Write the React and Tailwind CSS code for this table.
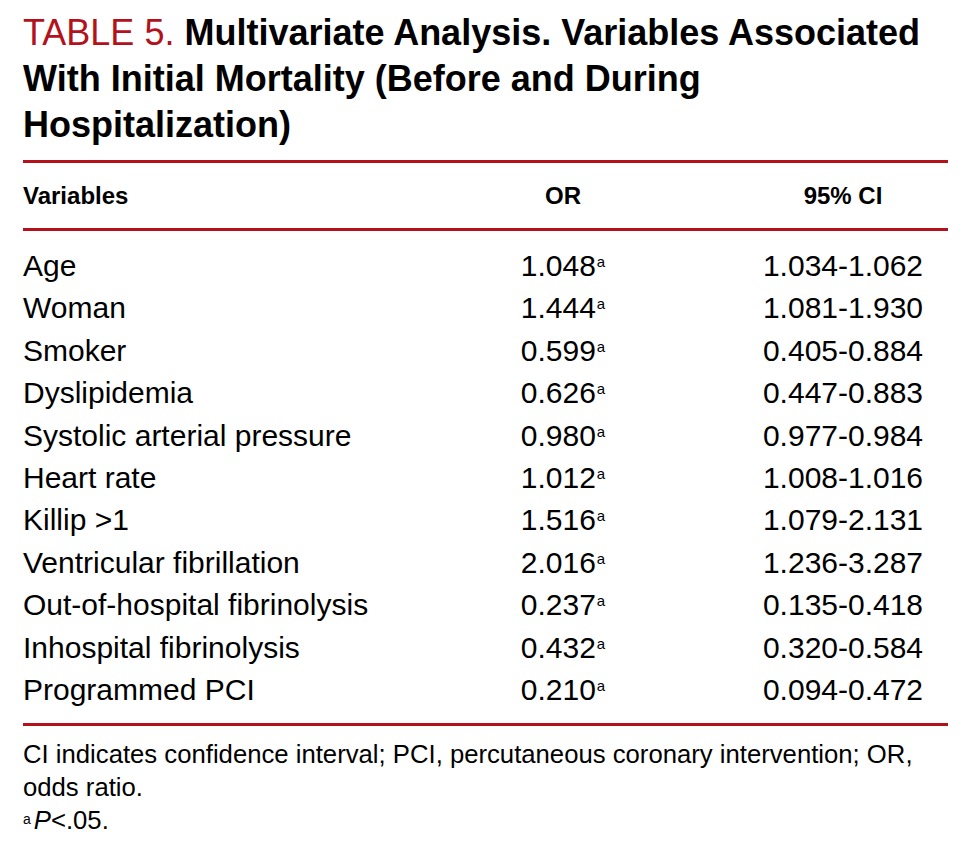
import React from "react";

const rows = [
  ["Age", "1.048", "1.034-1.062"],
  ["Woman", "1.444", "1.081-1.930"],
  ["Smoker", "0.599", "0.405-0.884"],
  ["Dyslipidemia", "0.626", "0.447-0.883"],
  ["Systolic arterial pressure", "0.980", "0.977-0.984"],
  ["Heart rate", "1.012", "1.008-1.016"],
  ["Killip >1", "1.516", "1.079-2.131"],
  ["Ventricular fibrillation", "2.016", "1.236-3.287"],
  ["Out-of-hospital fibrinolysis", "0.237", "0.135-0.418"],
  ["Inhospital fibrinolysis", "0.432", "0.320-0.584"],
  ["Programmed PCI", "0.210", "0.094-0.472"],
];

const Rule = () => <div className="h-[3px] w-full bg-[#b3111c]" />;

const App = () => {
  return (
    <div className="w-[978px] h-[850px] bg-white text-black font-['Liberation_Sans',Arial,sans-serif]">
      <div className="w-[925px] ml-[23px]">
        <h1 className="pt-[10px] text-[36px] leading-[46px] font-bold">
          <span className="text-[#b3111c] font-normal">TABLE 5.</span> Multivariate
          Analysis. Variables Associated With Initial Mortality (Before and
          During Hospitalization)
        </h1>

        <div className="mt-[12px]">
          <Rule />
        </div>

        <div className="grid grid-cols-[365px_350px_210px] h-[65px] items-center font-bold text-[24px]">
          <span>Variables</span>
          <span className="text-center">OR</span>
          <span className="text-center">95% CI</span>
        </div>

        <Rule />

        <div className="pt-[14px] pb-[12px] text-[30px] leading-[42.4px]">
          {rows.map(([name, or, ci]) => (
            <div key={name} className="grid grid-cols-[365px_350px_210px]">
              <span className="whitespace-nowrap">{name}</span>
              <span className="text-center">
                {or}
                <sup className="ml-[1px] align-top relative top-[9px] text-[15px] leading-none">
                  a
                </sup>
              </span>
              <span className="text-center">{ci}</span>
            </div>
          ))}
        </div>

        <Rule />

        <div className="pt-[12px] text-[25.7px] leading-[33px]">
          <p>
            CI indicates confidence interval; PCI, percutaneous coronary
            intervention; OR, odds ratio.
          </p>
          <p>
            <sup className="align-top relative top-[8px] text-[14px] leading-none mr-[3px]">
              a
            </sup>
            <i>P</i>&lt;.05.
          </p>
        </div>
      </div>
    </div>
  );
};

export default App;
